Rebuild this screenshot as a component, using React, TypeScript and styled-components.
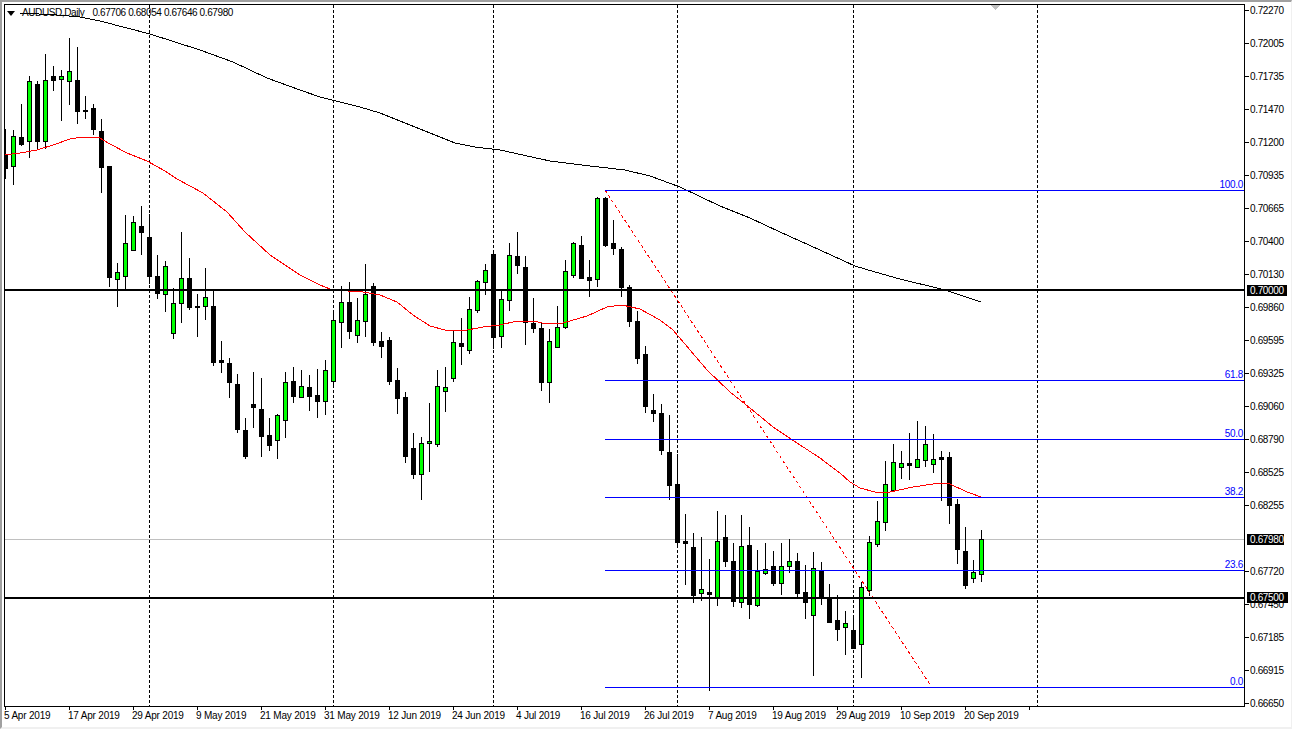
import React from 'react'
import styled, { createGlobalStyle } from 'styled-components'

const GlobalStyle = createGlobalStyle`
  html, body {
    margin: 0;
    padding: 0;
    background: #fff;
  }
`

// wick top, body top, body bottom, wick bottom, bullish
type Candle = [number, number, number, number, 0 | 1]

const candles: Candle[] = [
  [129, 154, 168, 178, 0], [130, 136, 166, 184, 1], [104, 137, 144, 145, 0], [76, 81, 141, 157, 1],
  [81, 84, 141, 148, 0], [54, 80, 141, 148, 1], [66, 76, 80, 90, 0], [70, 76, 79, 120, 1],
  [38, 71, 81, 104, 1], [47, 80, 111, 123, 0], [96, 110, 111, 118, 0], [104, 108, 129, 134, 0],
  [119, 131, 167, 192, 0], [166, 166, 277, 286, 0], [263, 272, 279, 306, 1], [215, 243, 276, 288, 1],
  [216, 222, 250, 250, 1], [206, 226, 232, 254, 0], [214, 237, 276, 283, 0], [255, 276, 293, 298, 0],
  [261, 266, 294, 311, 1], [288, 303, 333, 338, 1], [232, 278, 303, 322, 1], [258, 278, 307, 309, 0],
  [294, 306, 307, 336, 0], [268, 297, 306, 319, 1], [290, 306, 362, 365, 0], [341, 360, 362, 372, 0],
  [358, 363, 382, 397, 0], [374, 384, 429, 432, 0], [418, 430, 456, 458, 0], [372, 404, 407, 427, 0],
  [378, 409, 436, 456, 0], [418, 435, 445, 450, 0], [414, 415, 440, 458, 1], [372, 382, 420, 437, 1],
  [367, 381, 396, 402, 0], [370, 386, 397, 397, 1], [375, 387, 396, 410, 0], [369, 395, 401, 417, 0],
  [360, 370, 401, 414, 1], [310, 320, 381, 385, 1], [286, 302, 322, 347, 1], [282, 302, 331, 338, 0],
  [298, 320, 335, 342, 1], [264, 294, 321, 336, 1], [283, 286, 342, 345, 0], [332, 341, 346, 357, 0],
  [337, 340, 381, 384, 0], [368, 380, 398, 413, 0], [392, 397, 456, 462, 0], [433, 448, 474, 478, 0],
  [437, 443, 474, 499, 1], [403, 441, 443, 471, 1], [370, 386, 444, 446, 1], [367, 387, 391, 411, 1],
  [331, 342, 378, 381, 1], [318, 343, 346, 364, 0], [297, 309, 350, 353, 1], [280, 281, 310, 312, 1],
  [264, 270, 282, 294, 1], [251, 254, 337, 348, 0], [291, 299, 336, 347, 1], [243, 255, 300, 310, 1],
  [232, 256, 265, 273, 0], [256, 267, 322, 344, 0], [298, 323, 328, 332, 0], [322, 328, 382, 390, 0],
  [329, 341, 382, 402, 1], [306, 327, 347, 347, 1], [260, 271, 327, 328, 1], [242, 243, 275, 277, 1],
  [236, 245, 278, 278, 0], [260, 277, 280, 296, 0], [197, 198, 279, 286, 1], [197, 198, 245, 246, 0],
  [220, 243, 248, 254, 0], [247, 249, 287, 296, 0], [285, 287, 321, 326, 0], [311, 321, 358, 363, 0],
  [346, 354, 406, 412, 0], [394, 410, 413, 421, 0], [404, 413, 450, 454, 0], [415, 452, 485, 499, 0],
  [454, 484, 542, 547, 0], [514, 541, 543, 584, 0], [533, 547, 595, 602, 0], [537, 589, 593, 600, 1],
  [559, 592, 594, 690, 0], [511, 541, 598, 605, 1], [515, 537, 561, 566, 0], [543, 561, 601, 606, 0],
  [515, 546, 602, 607, 1], [527, 545, 604, 618, 0], [550, 571, 605, 606, 1], [543, 569, 573, 574, 1],
  [551, 566, 583, 585, 0], [543, 566, 583, 594, 1], [539, 561, 566, 572, 1], [553, 561, 593, 597, 0],
  [565, 592, 602, 618, 0], [552, 568, 615, 675, 1], [562, 570, 598, 604, 0], [584, 597, 622, 622, 0],
  [595, 620, 629, 640, 0], [611, 623, 627, 654, 1], [616, 630, 648, 648, 0], [582, 587, 644, 677, 1],
  [536, 542, 590, 595, 1], [501, 521, 544, 546, 1], [461, 484, 522, 530, 1], [444, 462, 490, 491, 1],
  [451, 463, 467, 478, 1], [433, 463, 465, 479, 0], [421, 459, 467, 467, 1], [426, 444, 460, 466, 1],
  [434, 459, 464, 472, 1], [451, 457, 459, 500, 0], [452, 457, 505, 523, 0], [499, 504, 549, 563, 0],
  [527, 551, 585, 588, 0], [560, 572, 578, 582, 1], [530, 539, 574, 581, 1],
]

const slowAverage =
  '20,13 57,15 80,17 100,21 150,34 200,50 233,62 267,78 300,90 320,97 340,102 360,107 380,113 400,121 430,133 455,143 475,147 500,150 550,161 590,166 625,170 650,176 680,187 720,206 750,218 780,232 820,250 855,266 875,272 900,279 945,290 981,302'

const fastAverage =
  '5,155 20,153 37,150 53,145 70,139 83,137 98,137 110,144 127,153 147,161 165,171 177,179 203,193 227,212 245,232 270,255 300,275 320,285 330,289 348,291 363,292 380,295 397,302 413,315 430,326 445,330 462,331 483,327 500,325 517,321 533,321 547,324 563,323 587,316 607,307 622,305 640,309 660,320 673,330 707,370 730,392 750,408 773,427 797,443 820,458 840,473 850,482 860,488 875,492 890,492 913,487 940,483 950,484 967,492 981,497'

const gridLines = [149, 333, 493, 677, 853, 1037]

const fibLevels = [
  { label: '100.0', y: 190 },
  { label: '61.8', y: 380 },
  { label: '50.0', y: 439 },
  { label: '38.2', y: 497 },
  { label: '23.6', y: 570 },
  { label: '0.0', y: 687 },
]

const prices = [
  '0.72270', '0.72005', '0.71735', '0.71470', '0.71200', '0.70935', '0.70665', '0.70400',
  '0.70130', '0.69860', '0.69595', '0.69325', '0.69060', '0.68790', '0.68525', '0.68255',
  '', '0.67720', '0.67450', '0.67185', '0.66915', '0.66650',
]

const priceTags = [
  { label: '0.70000', y: 290, width: 37 },
  { label: '0.67980', y: 539, width: 34 },
  { label: '0.67500', y: 597, width: 38 },
]

const dates = [
  '5 Apr 2019', '17 Apr 2019', '29 Apr 2019', '9 May 2019', '21 May 2019', '31 May 2019',
  '12 Jun 2019', '24 Jun 2019', '4 Jul 2019', '16 Jul 2019', '26 Jul 2019', '7 Aug 2019',
  '19 Aug 2019', '29 Aug 2019', '10 Sep 2019', '20 Sep 2019', '',
]

const Terminal = styled.div`
  box-sizing: border-box;
  width: 1292px;
  height: 729px;
  overflow: hidden;
  display: flex;
  flex-direction: column;
  padding: 2px 0 0 2px;
  background: #fff;
  border-top: 2px solid #a0a0a0;
  border-left: 2px solid #a0a0a0;
  border-right: 1px solid #f0f0f0;
  border-bottom: 2px solid #f0f0f0;
  font-family: 'Liberation Sans', Arial, sans-serif;
  font-size: 10px;
  letter-spacing: -0.2px;
  color: #000;
`

const ChartRow = styled.div`
  display: flex;
  height: 703px;
`

const Plot = styled.div`
  position: relative;
  flex: none;
  box-sizing: border-box;
  width: 1241px;
  height: 703px;
  border: 1px solid #000;
`

const Canvas = styled.svg`
  display: block;
`

const ChartTitle = styled.div`
  position: absolute;
  top: 2px;
  left: 2px;
  display: flex;
  align-items: center;
  gap: 6px;
  line-height: 12px;
  letter-spacing: -0.4px;
  white-space: nowrap;
`

const TitleMarker = styled.span`
  width: 0;
  height: 0;
  margin-right: 1px;
  border-left: 4px solid transparent;
  border-right: 4px solid transparent;
  border-top: 5px solid #000;
`

const TitleValues = styled.span`
  margin-left: 2px;
`

const FibLabel = styled.span.attrs<{ $y: number }>((props) => ({
  style: { top: props.$y - 16 },
}))<{ $y: number }>`
  position: absolute;
  right: 1px;
  line-height: 12px;
  letter-spacing: -0.3px;
  color: #0000ff;
`

const PriceAxis = styled.div`
  position: relative;
  flex: 1;
  display: flex;
  flex-direction: column;
  padding-top: 1px;
  letter-spacing: -0.35px;
`

const PriceRow = styled.div`
  flex: none;
  height: 33px;
  line-height: 12px;
  padding-left: 5px;
  white-space: nowrap;
`

const PriceTick = styled.i`
  display: inline-block;
  width: 4px;
  height: 1px;
  margin: 0 1px 3px -5px;
  background: #000;
`

const PriceTag = styled.span.attrs<{ $y: number; $width: number }>((props) => ({
  style: { top: props.$y - 9, width: props.$width },
}))<{ $y: number; $width: number }>`
  position: absolute;
  left: 2px;
  height: 11px;
  line-height: 11px;
  padding-left: 3px;
  background: #000;
  color: #fff;
  white-space: nowrap;
`

const TimeAxis = styled.div`
  display: flex;
  height: 20px;
`

const TimeCell = styled.div`
  position: relative;
  flex: none;
  width: 64px;
  padding-top: 3px;
  line-height: 12px;
  white-space: nowrap;

  &::before {
    content: '';
    position: absolute;
    top: -1px;
    left: 1px;
    width: 1px;
    height: 4px;
    background: #000;
  }
`

function CandleBar({ candle, x }: { candle: Candle; x: number }) {
  const [wickTop, bodyTop, bodyBottom, wickBottom, bullish] = candle
  return (
    <g>
      <rect x={x} y={wickTop} width={1} height={wickBottom - wickTop + 1} fill="#000" />
      <rect x={x - 2} y={bodyTop} width={5} height={bodyBottom - bodyTop + 1} fill="#000" />
      {bullish === 1 && bodyBottom - bodyTop > 1 && (
        <rect x={x - 1} y={bodyTop + 1} width={3} height={bodyBottom - bodyTop - 1} fill="#00ff00" />
      )}
    </g>
  )
}

export default function App() {
  return (
    <Terminal>
      <GlobalStyle />
      <ChartRow>
        <Plot>
          <Canvas width={1239} height={701} viewBox="5 5 1239 701" shapeRendering="crispEdges">
            {gridLines.map((x) => (
              <line key={x} x1={x + 0.5} y1={5} x2={x + 0.5} y2={706} stroke="#000" strokeDasharray="3 2" />
            ))}
            <rect x={5} y={539} width={1239} height={1} fill="#c0c0c0" />
            {candles.map((candle, i) => (
              <CandleBar key={i} candle={candle} x={5 + i * 8} />
            ))}
            <polyline points={slowAverage} fill="none" stroke="#000" />
            <polyline points={fastAverage} fill="none" stroke="#ff0000" />
            <line x1={605} y1={190} x2={931} y2={686} stroke="#ff0000" strokeDasharray="3 3" />
            {fibLevels.map((level) => (
              <rect key={level.y} x={605} y={level.y} width={639} height={1} fill="#0000ff" />
            ))}
            <rect x={5} y={289} width={1239} height={2} fill="#000" />
            <rect x={5} y={597} width={1239} height={2} fill="#000" />
            <polygon points="990,5 1000,5 995,10" fill="#c0c0c0" />
          </Canvas>
          <ChartTitle>
            <TitleMarker />
            <span>AUDUSD,Daily</span>
            <TitleValues>0.67706 0.68054 0.67646 0.67980</TitleValues>
          </ChartTitle>
          {fibLevels.map((level) => (
            <FibLabel key={level.label} $y={level.y}>
              {level.label}
            </FibLabel>
          ))}
        </Plot>
        <PriceAxis>
          {prices.map((price, i) => (
            <PriceRow key={i}>
              {price && <PriceTick />}
              {price}
            </PriceRow>
          ))}
          {priceTags.map((tag) => (
            <PriceTag key={tag.label} $y={tag.y} $width={tag.width}>
              {tag.label}
            </PriceTag>
          ))}
        </PriceAxis>
      </ChartRow>
      <TimeAxis>
        {dates.map((date, i) => (
          <TimeCell key={i}>{date}</TimeCell>
        ))}
      </TimeAxis>
    </Terminal>
  )
}
